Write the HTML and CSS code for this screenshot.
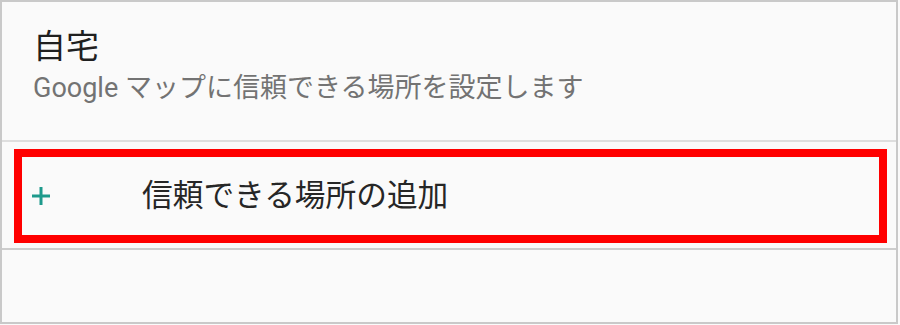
FILE: index.html
```html
<!DOCTYPE html>
<html lang="ja">
<head>
<meta charset="utf-8">
<link rel="stylesheet" href="styles.css">
</head>
<body>
<div class="panel">
  <div class="pref">
    <div class="pref-title">自宅</div>
    <div class="pref-summary">Google マップに信頼できる場所を設定します</div>
  </div>
  <div class="add-row">
    <div class="highlight">
      <svg class="plus" width="18" height="18" viewBox="0 0 18 18" aria-hidden="true">
        <rect x="7.5" y="0" width="3" height="18" fill="#1e9a8c"/>
        <rect x="0" y="7.5" width="18" height="3" fill="#1e9a8c"/>
      </svg>
      <span class="add-label">信頼できる場所の追加</span>
    </div>
  </div>
  <div class="empty"></div>
</div>
</body>
</html>
```

FILE: styles.css
```css
html, body {
  margin: 0;
  padding: 0;
  background: #fafafa;
}
body {
  width: 900px;
  height: 325px;
  font-family: Roboto, "Noto Sans CJK JP", sans-serif;
}
.panel {
  box-sizing: border-box;
  width: 898px;
  height: 324px;
  border: 2px solid #c9c9c9;
  background: #fafafa;
  display: flex;
  flex-direction: column;
}
.pref {
  box-sizing: border-box;
  height: 140px;
  padding: 22px 0 0 31px;
  border-bottom: 2px solid #dedede;
}
.pref-title {
  font-size: 33px;
  line-height: 46px;
  color: #1f1f1f;
}
.pref-summary {
  font-size: 27px;
  line-height: 36px;
  color: #737373;
  margin-top: 0;
}
.add-row {
  box-sizing: border-box;
  height: 108px;
  padding: 7px 9px 5px 12px;
  border-bottom: 2px solid #cdcdcd;
}
.highlight {
  box-sizing: border-box;
  height: 94px;
  border: 8px solid #ff0000;
  display: flex;
  align-items: center;
  padding-left: 10px;
}
.plus {
  flex: none;
  display: block;
}
.add-label {
  margin-left: 92px;
  font-size: 30.7px;
  line-height: 40px;
  color: #262626;
}
.empty {
  flex: 1;
}
```
